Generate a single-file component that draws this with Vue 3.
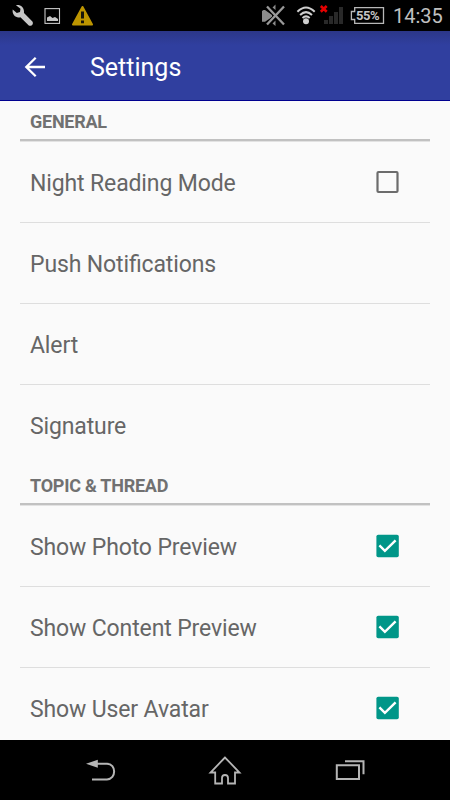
<script setup>
import { ref } from 'vue'

const sections = ref([
  {
    title: 'GENERAL',
    items: [
      { label: 'Night Reading Mode', type: 'check', checked: false },
      { label: 'Push Notifications', type: 'link' },
      { label: 'Alert', type: 'link' },
      { label: 'Signature', type: 'link' }
    ]
  },
  {
    title: 'TOPIC & THREAD',
    items: [
      { label: 'Show Photo Preview', type: 'check', checked: true },
      { label: 'Show Content Preview', type: 'check', checked: true },
      { label: 'Show User Avatar', type: 'check', checked: true }
    ]
  }
])

const toggle = (item) => {
  if (item.type === 'check') {
    item.checked = !item.checked
  }
}
</script>

<template>
  <div class="screen">
    <div class="status-bar">
      <svg class="status-left" width="100" height="31" viewBox="0 0 100 31">
        <path
          d="M16 5.3 C19.5 4.3 24.6 6.8 24 13 L32.4 21.4 C34 24 31.6 26.6 28.8 25.5 L20.4 17.2 C16.5 18.8 11.8 15 12.7 9.6 L16.8 13 L20 12 L20.5 8.8 Z"
          fill="#c6c6c6"
        />
        <rect x="45" y="8.6" width="14.5" height="14.8" fill="none" stroke="#c6c6c6" stroke-width="1.1" />
        <path d="M47 21 V17.5 L50 16 L52.5 18 L55 17 L58 19 V21 Z" fill="#c6c6c6" />
        <path d="M82.5 7 L92 24.5 H73 Z" fill="#bd9500" stroke="#bd9500" stroke-width="2" stroke-linejoin="round" />
        <path d="M81 11.5 H84 V18.5 H81 Z M81 20.5 H84 V23.3 H81 Z" fill="#17150a" />
      </svg>
      <div class="status-right">
        <svg width="84" height="31" viewBox="262 0 84 31">
          <path d="M262 11 L263.5 10 H265 L272 15 V17 L265 21.8 H262 Z M272.5 7.5 L275.5 4.5 V10 Z M272.5 23.5 L275.5 26 V20.5 Z" fill="#8c8c8c" />
          <path d="M267 6.5 L284 24.5 M284 6.5 L267 24.5" stroke="#000" stroke-width="3.4" />
          <path d="M267 6.5 L284 24.5 M284 6.5 L267 24.5" stroke="#999" stroke-width="2.3" />
          <g fill="none" stroke="#cfcfcf" stroke-width="2">
            <path d="M297.4 11.7 Q306 3.2 314.7 11.7" />
            <path d="M300.1 15 Q306 9.2 312 15" />
            <path d="M302.5 18 Q306 14.8 309.7 18" />
          </g>
          <circle cx="306" cy="21.3" r="3" fill="#cfcfcf" />
          <path d="M324 20 H328 V24 H324 Z M329 16 H333 V24 H329 Z M334 12 H338 V24 H334 Z M339 7 H343 V24 H339 Z" fill="#292929" />
          <path d="M320.8 6 L326.7 11.7 M326.7 6 L320.8 11.7" stroke="#e50000" stroke-width="2.6" />
        </svg>
        <div class="battery">
          <svg width="36" height="19" viewBox="0 0 36 19">
            <path d="M4.7 1.7 H33.5 V17.3 H4.7 V13.5 H1.4 V5.5 H4.7 Z" fill="none" stroke="#b8b8b8" stroke-width="1.3" />
          </svg>
          <span class="battery-text">55%</span>
        </div>
        <span class="clock">14:35</span>
      </div>
    </div>

    <div class="app-bar">
      <svg class="back" width="22" height="22" viewBox="0 0 22 22">
        <path d="M21 11 H2.5 M11.7 1.7 L2.3 11 L11.7 20.3" fill="none" stroke="#fff" stroke-width="2.3" />
      </svg>
      <span class="title">Settings</span>
    </div>

    <div class="content">
      <div v-for="section in sections" :key="section.title" class="section">
        <div class="section-title">{{ section.title }}</div>
        <div
          v-for="item in section.items"
          :key="item.label"
          class="row"
          @click="toggle(item)"
        >
          <span class="label">{{ item.label }}</span>
          <svg v-if="item.type === 'check'" width="24" height="24" viewBox="0 0 24 24">
            <template v-if="item.checked">
              <rect x="0.4" y="0.8" width="22.4" height="22.4" rx="1.8" fill="#009688" />
              <path d="M3.4 11.3 L8.9 16.8 L19.6 6.3" fill="none" stroke="#fff" stroke-width="2.4" />
            </template>
            <rect v-else x="1.5" y="2" width="20" height="20" rx="1" fill="none" stroke="#6c6c6c" stroke-width="2.2" />
          </svg>
        </div>
      </div>
    </div>

    <div class="nav-bar">
      <svg width="450" height="60" viewBox="0 0 450 60">
        <g fill="none" stroke="#b5b5b5" stroke-width="2">
          <path d="M96 23.8 H107 C116.5 23.8 116.5 39.4 107 39.4 H92" />
          <path d="M225 17.5 L210.5 32.5 H215.2 V43.5 H222 V38 C222 34 228 34 228 38 V43.5 H235 V32.5 H239.5 Z" stroke-width="1.8" />
          <path d="M336.8 25.2 H359 V39 H336.8 Z M345 21.3 H363.5 V34.3" />
        </g>
        <path d="M86 23.8 L97.8 19.7 V27.8 Z" fill="#b5b5b5" />
      </svg>
    </div>
  </div>
</template>

<style>
body {
  margin: 0;
  overflow: hidden;
}
</style>

<style scoped>
.screen {
  display: flex;
  flex-direction: column;
  width: 450px;
  height: 800px;
  overflow: hidden;
  background-color: #fafafa;
  font-family: Roboto, "Liberation Sans", sans-serif;
}

.screen svg {
  display: block;
  flex-shrink: 0;
}

.status-bar {
  display: flex;
  justify-content: space-between;
  height: 31px;
  flex-shrink: 0;
  background-color: #000;
}

.status-right {
  display: flex;
  align-items: center;
  width: 188px;
}

.battery {
  position: relative;
  margin: 0 7px 0 4px;
}

.battery-text {
  position: absolute;
  top: 0;
  left: 6px;
  font-size: 13px;
  font-weight: 700;
  letter-spacing: -0.5px;
  line-height: 20px;
  color: #c4c4c4;
}

.clock {
  padding-top: 2px;
  font-size: 20px;
  line-height: 31px;
  color: #c0c0c0;
}

.app-bar {
  display: flex;
  align-items: center;
  box-sizing: border-box;
  height: 70px;
  flex-shrink: 0;
  padding: 2px 24px 0;
  background: linear-gradient(#2c3788, #303f9f 14px);
  border-bottom: 1px solid #00008f;
}

.title {
  margin-left: 44px;
  padding-top: 2px;
  font-size: 25px;
  line-height: 32px;
  color: #fff;
}

.content {
  height: 639px;
  flex-shrink: 0;
  padding: 0 20px;
  overflow: hidden;
}

.section-title {
  box-sizing: border-box;
  height: 40px;
  margin-bottom: 1px;
  padding: 0 10px;
  border-bottom: 2px solid #c1c1c1;
  box-shadow: 0 1px 0 #e2e2e2;
  font-size: 18px;
  font-weight: 700;
  letter-spacing: -0.25px;
  line-height: 42px;
  color: #717171;
}

.row {
  display: flex;
  align-items: center;
  justify-content: space-between;
  box-sizing: border-box;
  height: 81px;
  padding: 0 30px 0 10px;
  border-bottom: 1px solid #dedede;
}

.row:last-child {
  height: 80px;
  border-bottom: none;
}

.label {
  padding-top: 4px;
  font-size: 23px;
  font-feature-settings: "liga" 1;
  letter-spacing: -0.13px;
  line-height: 30px;
  color: #666;
}

.nav-bar {
  height: 60px;
  flex-shrink: 0;
  background-color: #000;
}
</style>
